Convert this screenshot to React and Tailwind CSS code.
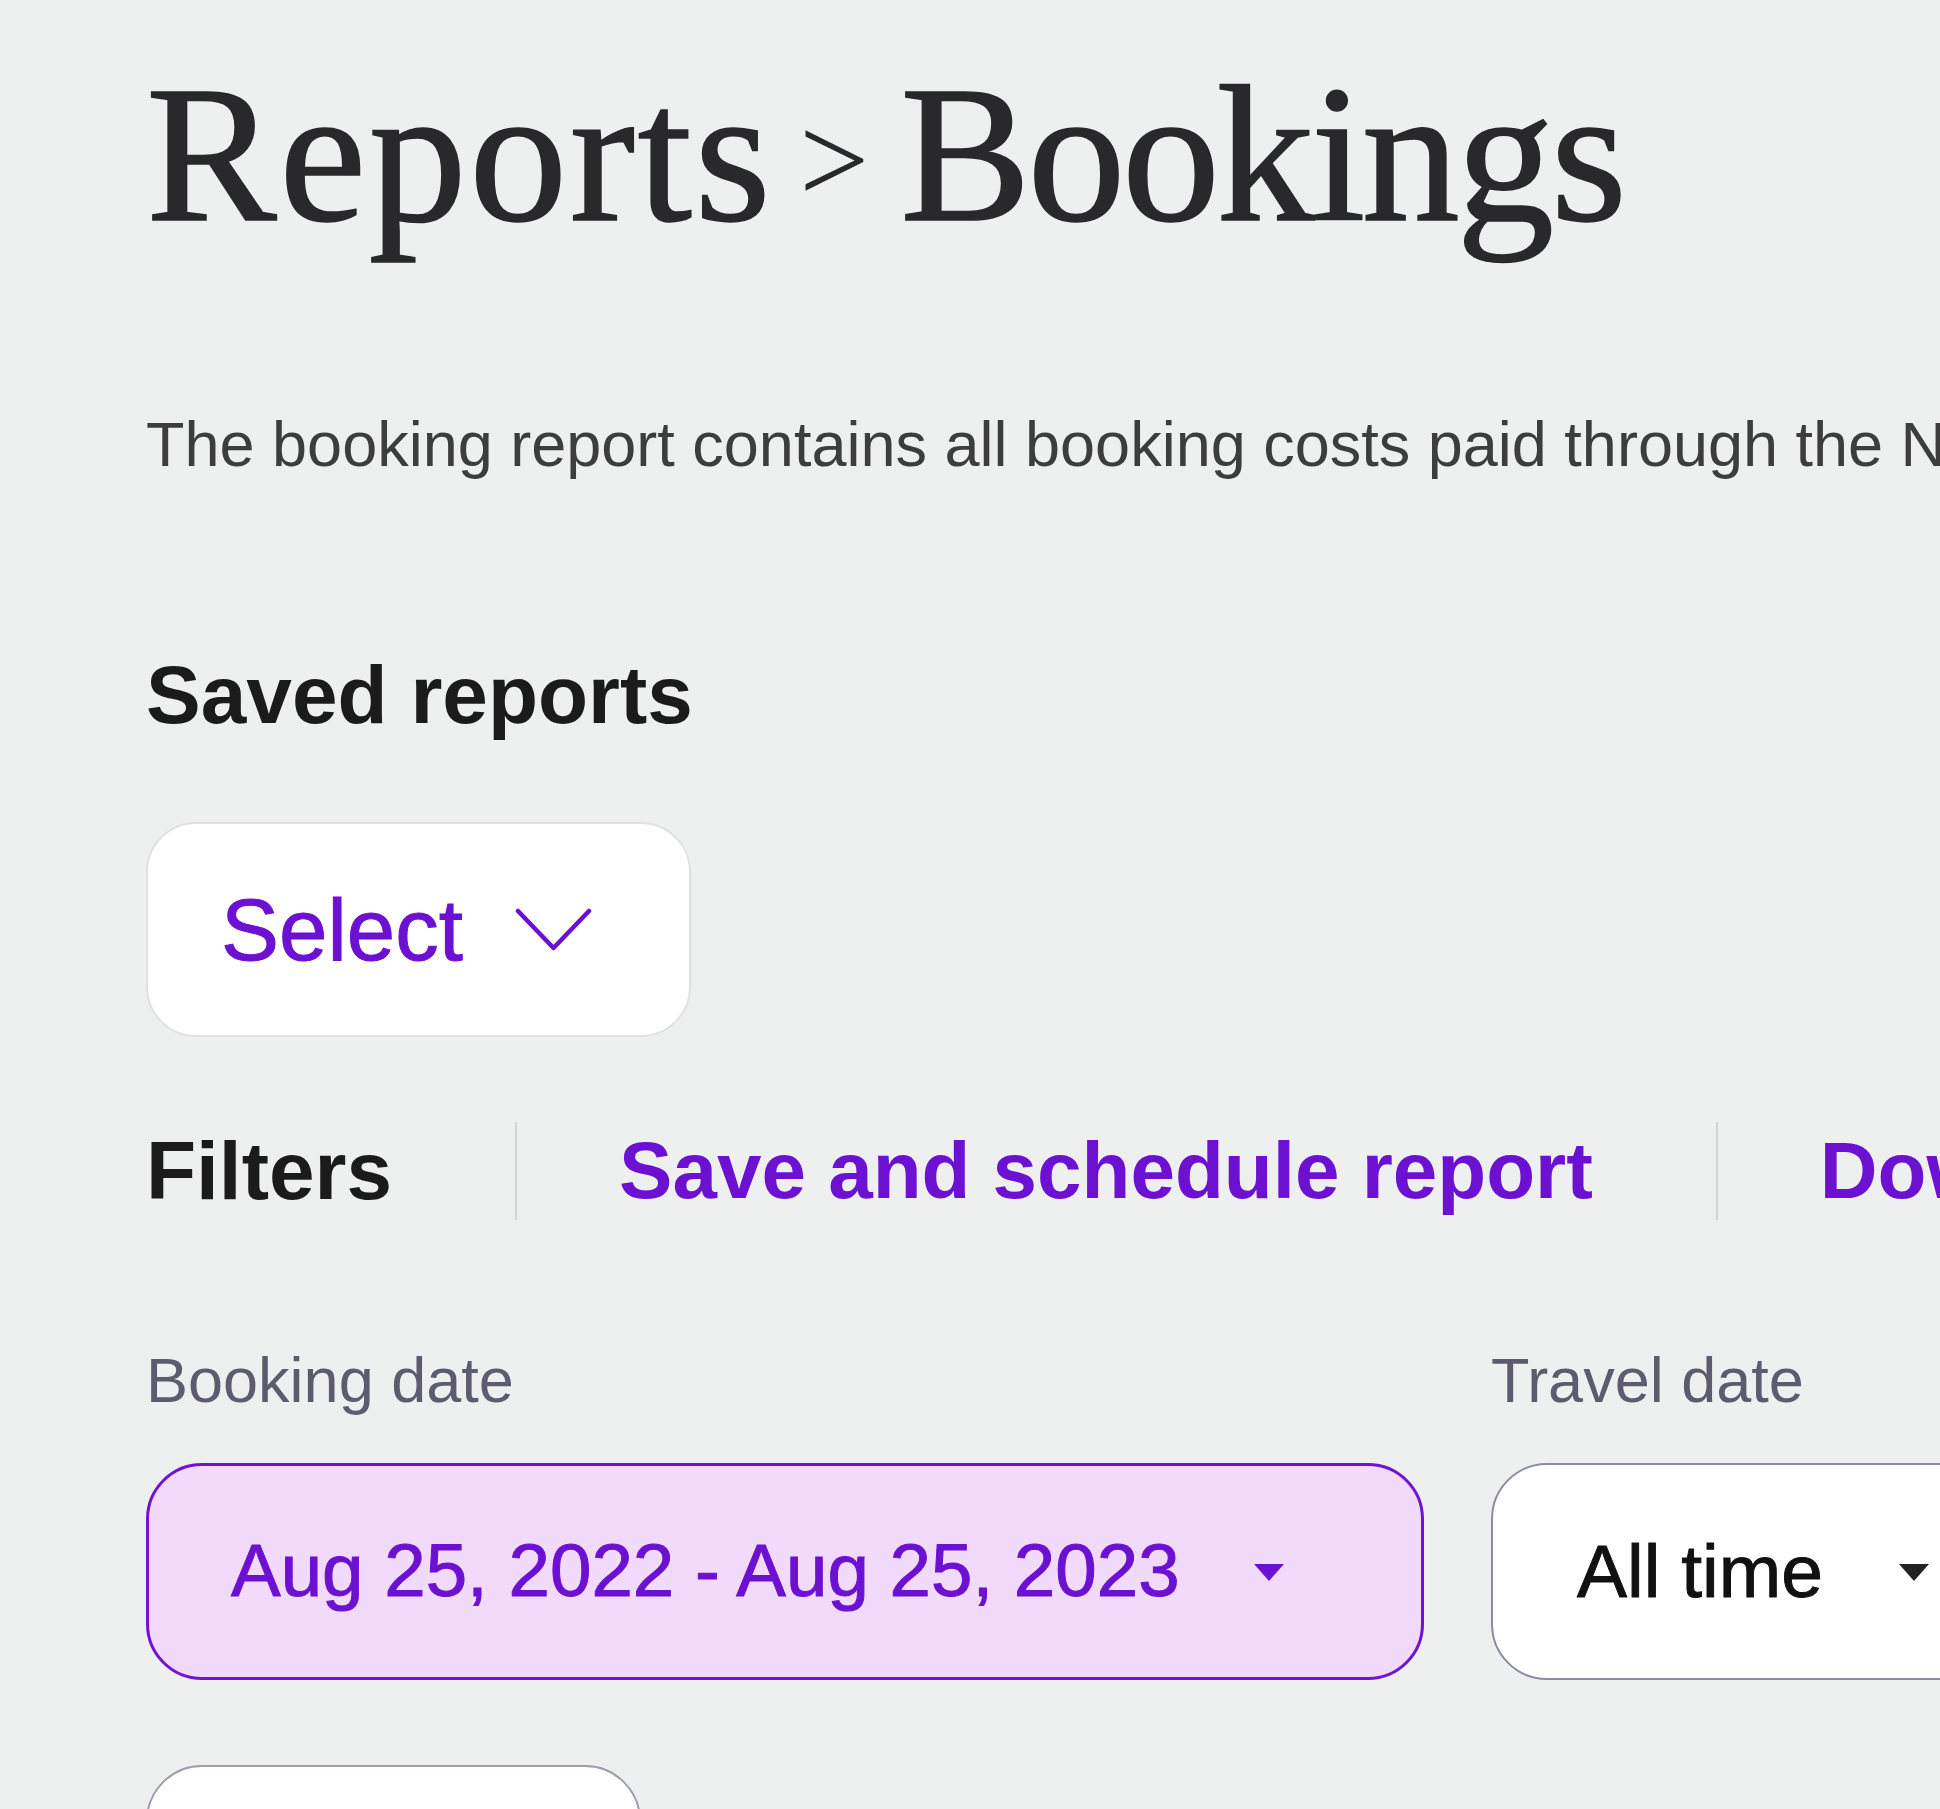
import React from "react";

const purple = "text-[#6c10d2]";

function Chevron() {
  return (
    <svg width="77" height="45" viewBox="0 0 77 45" className="ml-[52px] shrink-0">
      <polyline points="3,4 38.5,41 74,4" fill="none" stroke="#6c10d2" strokeWidth="4.5" strokeLinecap="round" strokeLinejoin="round" />
    </svg>
  );
}

function Caret({ color, className }) {
  return (
    <svg width="32" height="20" viewBox="0 0 32 20" className={className}>
      <polygon points="1,2 31,2 16,19" fill={color} strokeLinejoin="round" />
    </svg>
  );
}

export default function App() {
  return (
    <div className="w-[1940px] h-[1809px] overflow-hidden bg-[#eef0ef] font-['Liberation_Sans',Arial,sans-serif]">
      <div className="pl-[146px] pt-[56px] flex flex-col items-start">
        <h1 className="font-['Liberation_Serif','Times_New_Roman',serif] text-[196px] leading-none text-[#29292b] whitespace-nowrap font-normal [-webkit-text-stroke:1.5px_#29292b]">
          <span className="tracking-[2.5px]">Reports</span>
          <span className="text-[124px] align-[18px] ml-[26px] mr-[31px] [-webkit-text-stroke:0px_#29292b]">&gt;</span>
          <span className="tracking-[-3.5px]">Bookings</span>
        </h1>

        <p className="mt-[161px] text-[63px] leading-none text-[#3d3d3d] whitespace-nowrap">
          The booking report contains all booking costs paid through the Navan platform, including flights, hotels and cars.
        </p>

        <h2 className="mt-[178px] text-[82px] font-bold leading-none text-[#1b1b1b] whitespace-nowrap">
          Saved reports
        </h2>

        <button className="mt-[86px] h-[215px] rounded-[50px] border-2 border-[#e1e1e1] bg-white pl-[73px] pr-[97px] flex items-center">
          <span className={`text-[87px] leading-none ${purple} [-webkit-text-stroke:1px_#6c10d2]`}>Select</span>
          <Chevron />
        </button>

        <div className="mt-[85px] h-[98px] flex items-center whitespace-nowrap">
          <span className="text-[82px] font-bold leading-none text-[#1b1b1b]">Filters</span>
          <span className="w-[2px] h-[98px] bg-[#d2d3d2] ml-[123px] mr-[102px] shrink-0" />
          <span className={`text-[80px] font-bold leading-none ${purple}`}>Save and schedule report</span>
          <span className="w-[2px] h-[98px] bg-[#d2d3d2] ml-[123px] mr-[102px] shrink-0" />
          <span className={`text-[80px] font-bold leading-none ${purple}`}>Download report</span>
        </div>

        <div className="mt-[129px] flex gap-[67px] whitespace-nowrap">
          <div className="flex flex-col items-start shrink-0">
            <span className="text-[63px] leading-none text-[#5e5b6e]">Booking date</span>
            <button className="mt-[51px] w-[1278px] h-[217px] rounded-[56px] border-[3px] border-[#7013d3] bg-[#f1dafc] pl-[82px] flex items-center">
              <span className={`text-[74.5px] leading-none ${purple} [-webkit-text-stroke:1px_#6c10d2]`}>Aug 25, 2022 - Aug 25, 2023</span>
              <Caret color="#6c10d2" className="ml-[73px] shrink-0" />
            </button>
          </div>
          <div className="flex flex-col items-start shrink-0">
            <span className="text-[63px] leading-none text-[#5e5b6e]">Travel date</span>
            <button className="mt-[51px] h-[217px] rounded-[56px] border-2 border-[#8e8a9f] bg-white pl-[84px] pr-[135px] flex items-center">
              <span className="text-[75px] leading-none text-[#111111] [-webkit-text-stroke:1px_#111111]">All time</span>
              <Caret color="#222222" className="ml-[75px] shrink-0" />
            </button>
          </div>
        </div>

        <div className="mt-[85px] w-[495px] h-[216px] rounded-[56px] border-2 border-[#a09cb0] bg-white shrink-0" />
      </div>
    </div>
  );
}
